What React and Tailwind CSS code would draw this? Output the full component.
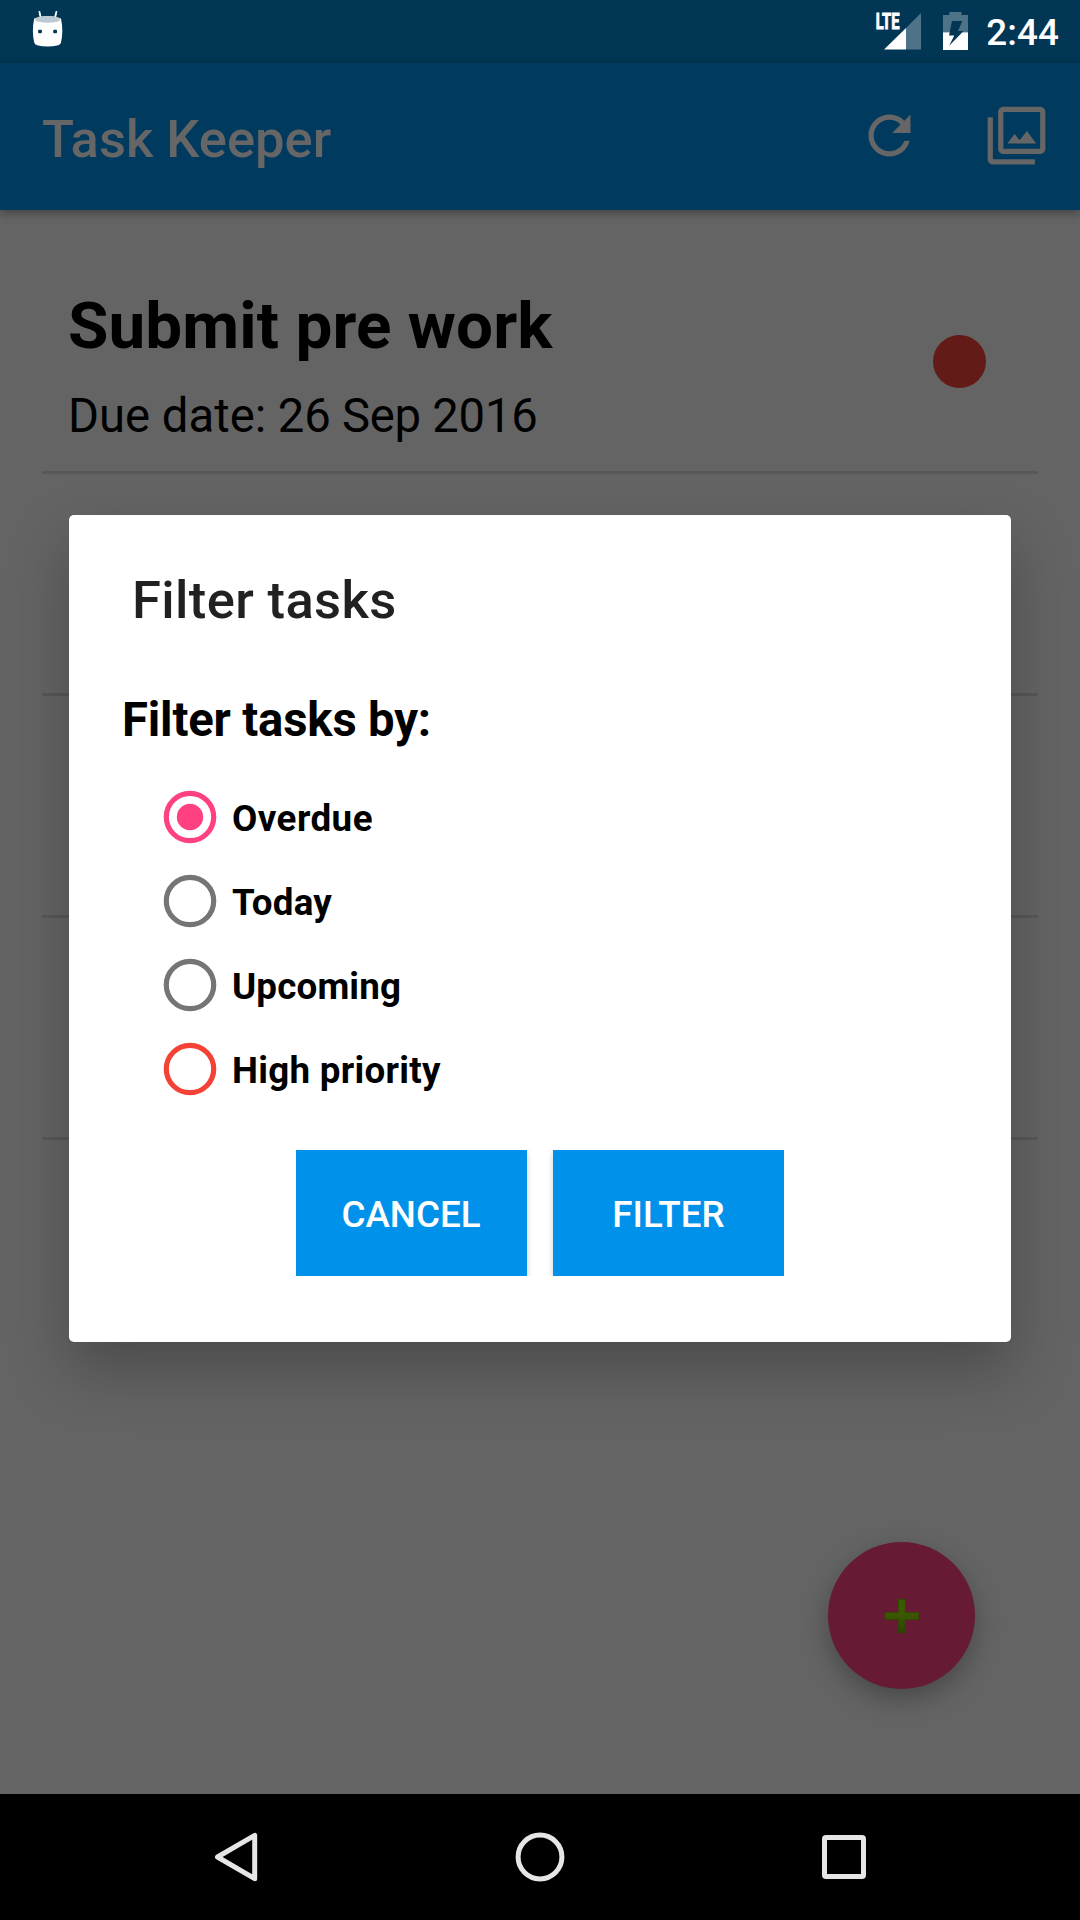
import React from "react";

function AndroidHead() {
  return (
    <svg className="h-[63px] w-[63px]" viewBox="0 0 63 63">
      <path d="M8.4 11.8l1.5 7M25.4 11.8l-1.6 7" stroke="#fff" strokeWidth="1.8" strokeLinecap="round" />
      <path d="M3.2 18.5Q16.6 13.5 30 18.5Q32.6 31 30 42.5Q29.5 44.6 27.2 45.2Q16.6 47.8 6 45.2Q3.8 44.6 3.2 42.5Q0.6 31 3.2 18.5z" fill="#fff" />
      <ellipse cx="16.6" cy="19.4" rx="12.6" ry="3.4" fill="#bccbd3" />
      <rect x="7.1" y="29.7" width="3.8" height="3.6" rx="1" fill="#013654" />
      <rect x="22.2" y="29.7" width="3.8" height="3.6" rx="1" fill="#013654" />
    </svg>
  );
}

function StatusBar() {
  return (
    <div className="flex h-[63px] items-center justify-between bg-[#013654] pr-[21px] pl-[31px]">
      <AndroidHead />
      <div className="flex items-center">
        <svg className="h-[63px] w-[46px]" viewBox="0 0 46 63">
          <path d="M46 13V49.5H31V28z" fill="#4e7287" />
          <path d="M31 28V49.5H9z" fill="#fff" />
          <text x="0.8" y="28.7" textLength="23.7" lengthAdjust="spacingAndGlyphs" fill="#fff" stroke="#fff" strokeWidth="0.9" fontFamily="Roboto, sans-serif" fontWeight="700" fontSize="21.5">LTE</text>
        </svg>
        <svg className="ml-[22px] h-[63px] w-[25px]" viewBox="0 0 25 63">
          <path d="M0 15H6.3V12H18.5V15H25V32.3H0z" fill="#4e7287" />
          <path d="M0 32.3H25V50H0z" fill="#fff" />
          <path d="M9 21H19.3L15 31H20.5L6 46L11.3 35.5H6z" fill="#013654" />
        </svg>
        <span className="ml-[18px] pt-[2px] text-[36.75px] leading-[56px] font-medium tracking-[0.1px] text-white">2:44</span>
      </div>
    </div>
  );
}

function AppBar() {
  return (
    <header className="relative flex h-[147px] items-center bg-[#003a5e] pr-[32px] pl-[42px] shadow-[0_3px_9px_rgba(0,0,0,0.35)]">
      <h1 className="flex-1 pt-[4px] text-[52.5px] leading-[62px] font-medium text-[#666666]">Task Keeper</h1>
      <svg className="mb-[2px] h-[63px] w-[63px]" viewBox="0 0 24 24" fill="#666666">
        <path d="M17.65 6.35C16.2 4.9 14.21 4 12 4c-4.42 0-7.99 3.58-7.99 8s3.57 8 7.99 8c3.73 0 6.84-2.55 7.73-6h-2.08c-.82 2.33-3.04 4-5.65 4-3.31 0-6-2.69-6-6s2.69-6 6-6c1.66 0 3.14.69 4.22 1.78L13 11h7V4l-2.35 2.35z" />
      </svg>
      <svg className="mb-[2px] ml-[64px] h-[63px] w-[63px]" viewBox="0 0 24 24" fill="#666666">
        <path d="M15.96 10.29l-2.75 3.54-1.96-2.36L8.5 15h11l-3.54-4.71zM3 5H1v16c0 1.1.9 2 2 2h16v-2H3V5zm18-4H7c-1.1 0-2 .9-2 2v14c0 1.1.9 2 2 2h14c1.1 0 2-.9 2-2V3c0-1.1-.9-2-2-2zm0 16H7V3h14v14z" />
      </svg>
    </header>
  );
}

function TaskList() {
  return (
    <div className="px-[42px] pt-[42px]">
      <div className="flex h-[222px] items-center justify-between border-b-[3px] border-[#585858] pr-[52px] pl-[26px]">
        <div className="pt-[7px]">
          <h2 className="text-[65.6px] leading-[78px] font-bold tracking-[0.1px] text-black">Submit pre work</h2>
          <p className="mt-[23px] text-[47.25px] leading-[56px] text-black">
            Due date: <span className="tracking-[-0.25px]">26 Sep 2016</span>
          </p>
        </div>
        <div className="h-[53px] w-[53px] rounded-full bg-[#621b16]" />
      </div>
      <div className="h-[222px] border-b-[3px] border-[#585858]" />
      <div className="h-[222px] border-b-[3px] border-[#585858]" />
      <div className="h-[222px] border-b-[3px] border-[#585858]" />
    </div>
  );
}

const OPTIONS = [
  { label: "Overdue", color: "#ff4081", checked: true, tracking: "tracking-[0.45px]" },
  { label: "Today", color: "#757575", tracking: "tracking-[0.2px]" },
  { label: "Upcoming", color: "#757575", tracking: "tracking-[0.15px]" },
  { label: "High priority", color: "#f44336", tracking: "tracking-[0.28px]" },
];

function FilterDialog() {
  return (
    <div className="absolute top-[515px] left-[69px] flex h-[827px] w-[942px] flex-col rounded-[5px] bg-white shadow-[0_28px_60px_rgba(0,0,0,0.25)]">
      <h2 className="mt-[54px] ml-[63px] text-[52.5px] leading-[62px] font-medium tracking-[0.38px] text-[#212121]">Filter tasks</h2>
      <h3 className="mt-[61px] ml-[53px] text-[47.25px] leading-[56px] font-bold tracking-[-0.17px] text-black">Filter tasks by:</h3>
      <div className="mt-[27px] ml-[94px] flex flex-col">
        {OPTIONS.map((o) => (
          <label key={o.label} className="flex h-[84px] items-center">
            <svg className="h-[54px] w-[54px]" viewBox="0 0 54 54">
              <circle cx="27" cy="27" r="23.7" fill="none" stroke={o.color} strokeWidth="5.2" />
              {o.checked && <circle cx="27" cy="27" r="13.2" fill={o.color} />}
            </svg>
            <span className={`ml-[15px] pt-[3px] text-[36.75px] leading-[44px] font-bold text-black ${o.tracking}`}>{o.label}</span>
          </label>
        ))}
      </div>
      <div className="mx-auto mt-[39px] flex gap-[26px] overflow-hidden">
        <button className="h-[126px] w-[231px] bg-[#0091ea] pt-[3px] pr-[1px] text-[36.75px] font-medium text-white shadow-[0_2px_6px_rgba(0,0,0,0.2)]">CANCEL</button>
        <button className="h-[126px] w-[231px] bg-[#0091ea] pt-[3px] text-[36.75px] font-medium text-white shadow-[0_2px_6px_rgba(0,0,0,0.2)]">FILTER</button>
      </div>
    </div>
  );
}

function AddButton() {
  return (
    <button className="absolute top-[1542px] left-[828px] flex h-[147px] w-[147px] items-center justify-center rounded-full bg-[#661a34] shadow-[0_10px_26px_rgba(0,0,0,0.28)]">
      <svg className="h-[36px] w-[36px]" viewBox="0 0 36 36">
        <defs>
          <linearGradient id="plus" x1="0" y1="0" x2="0" y2="1">
            <stop offset="0" stopColor="#375c00" />
            <stop offset="0.45" stopColor="#3a5900" />
            <stop offset="1" stopColor="#2c4200" />
          </linearGradient>
        </defs>
        <path d="M14.2 1.3h7.2v13.2h13.3v7H21.4v13.2h-7.2V21.5H1v-7h13.2z" fill="url(#plus)" stroke="#304800" strokeWidth="0.8" strokeLinejoin="round" />
      </svg>
    </button>
  );
}

function NavBar() {
  return (
    <nav className="flex h-[126px] items-center justify-between bg-black px-[205px]">
      <svg className="h-[63px] w-[63px]" viewBox="0 0 63 63" fill="none" stroke="#e6e6e6" strokeWidth="5" strokeLinejoin="round">
        <path d="M12.5 31L49.7 9.3V52.7z" />
      </svg>
      <svg className="h-[63px] w-[63px]" viewBox="0 0 63 63" fill="none" stroke="#e6e6e6" strokeWidth="5">
        <circle cx="31" cy="31" r="21.9" />
      </svg>
      <svg className="h-[63px] w-[63px]" viewBox="0 0 63 63" fill="none" stroke="#e6e6e6" strokeWidth="5">
        <rect x="12.5" y="11.5" width="39" height="39" rx="1.5" />
      </svg>
    </nav>
  );
}

export default function App() {
  return (
    <div className="relative flex h-[1920px] w-[1080px] flex-col overflow-hidden bg-[#646464] font-[Roboto,sans-serif]">
      <StatusBar />
      <AppBar />
      <main className="flex-1">
        <TaskList />
      </main>
      <NavBar />
      <AddButton />
      <FilterDialog />
    </div>
  );
}
